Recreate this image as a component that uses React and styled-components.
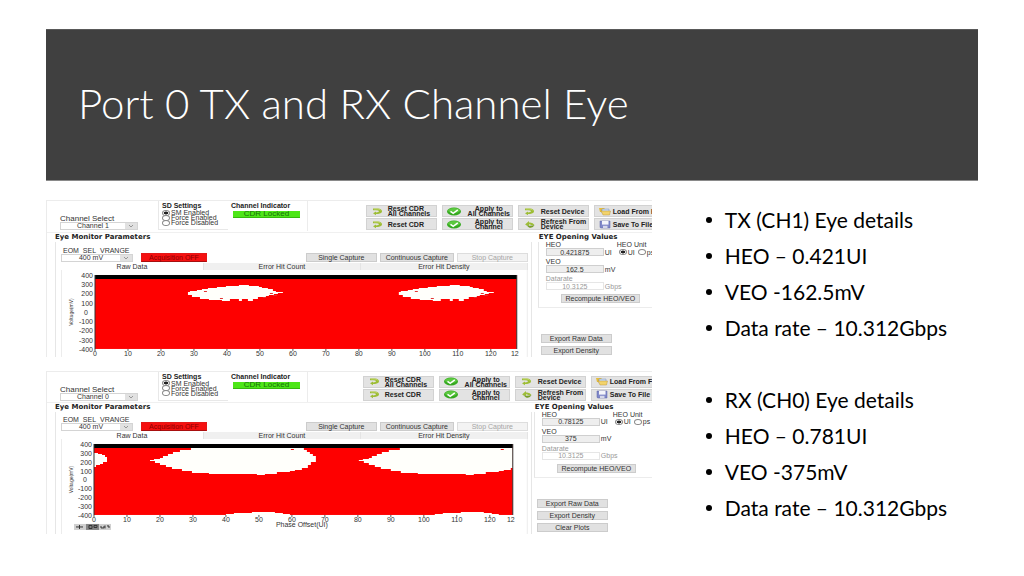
import React from 'react'
import styled, { createGlobalStyle } from 'styled-components'

const GlobalStyle = createGlobalStyle`
  * {
    box-sizing: border-box;
  }

  body {
    margin: 0;
    background: #ffffff;
  }

  h1, h2, h3, ul, fieldset {
    margin: 0;
    padding: 0;
    border: 0;
  }

  button, input, select {
    margin: 0;
    font: inherit;
    color: inherit;
  }
`

const Slide = styled.main`
  padding: 29px 46px 40px;
`

const Header = styled.header`
  display: flex;
  align-items: center;
  min-height: 152px;
  padding: 0 32px 4px;
  background: #404040;
  border-top: 1px solid #595959;
  border-bottom: 1px solid #8a8a8a;
`

const Title = styled.h1`
  font-family: Lato, 'Open Sans', sans-serif;
  font-size: 42px;
  font-weight: 300;
  line-height: 50px;
  color: #ffffff;
`

const Body = styled.div`
  display: grid;
  grid-template-columns: 65% minmax(0, 1fr);
  align-items: start;
  column-gap: 54px;
  padding-top: 19px;
`

const Captures = styled.div`
  display: grid;
  gap: 14px;
  font-family: 'Liberation Sans', Arial, sans-serif;
  font-size: 7px;
  line-height: 7px;
  color: #333333;
`

const Capture = styled.section`
  min-width: 0;
  overflow: hidden;
  border-left: 1px solid #ebebeb;
`

const TopBar = styled.div`
  display: flex;
  height: ${props => (props.$compact ? 32 : 33)}px;
  border-top: 1px solid #ececec;
  border-bottom: 1px solid #f0f0f0;
`

const Field = styled.div`
  display: flex;
  flex-direction: column;
`

const ChannelField = styled(Field)`
  width: 78px;
  margin: 14px 20px 0 13px;
  font-size: 8px;
`

const SelectBox = styled.div`
  position: relative;
  height: 8px;
  border: 1px solid #d4d4d4;

  svg {
    position: absolute;
    top: 0;
    right: 0;
    width: 12px;
    height: 6px;
    background: #e1e1e1;
    pointer-events: none;
  }
`

const Select = styled.select`
  display: block;
  width: 100%;
  height: 6px;
  padding: 0 12px 0 0;
  border: 0;
  background: #ffffff;
  appearance: none;
  font-size: 7px;
  line-height: 6px;
  text-align-last: center;
`

const SdSettings = styled.fieldset`
  width: 70px;
  height: 29px;
  padding: 1px 0 0 3px;
  border-left: 1px solid #e8e8e8;
  border-bottom: 1px solid #e8e8e8;
`

const GroupTitle = styled.div`
  line-height: 8px;
  font-weight: 700;
  color: #222222;
`

const RadioLabel = styled.label`
  display: flex;
  align-items: center;
  gap: 1px;
  height: 5px;
  white-space: nowrap;
`

const Radio = styled.input`
  flex: none;
  width: 8px;
  height: 6px;
  border: 1px solid #888888;
  border-radius: 50%;
  background: #ffffff;
  appearance: none;

  &:checked {
    background: radial-gradient(ellipse closest-side, #222222 60%, #ffffff 90%);
  }
`

const Indicator = styled.div`
  width: 80px;
  height: 30px;
  padding: 1px 0 0 3px;
  border-right: 1px solid #ececec;
`

const Locked = styled.output`
  display: block;
  width: 67px;
  margin: 1px 0 0 2px;
  background: #4de617;
  border-bottom: 1px solid #35b80c;
  font-size: 8px;
  line-height: 6px;
  text-align: center;
  color: #17700a;
`

const ActionClip = styled.div`
  width: ${props => (props.$compact ? 289 : 286)}px;
  margin: 4px 0 0 auto;
  overflow: hidden;
`

const Actions = styled.div`
  display: grid;
  grid-template-columns: repeat(4, 71px);
  gap: 1px 5px;
`

const ActionButton = styled.button`
  display: grid;
  grid-template-columns: 14px 1fr;
  align-items: center;
  height: 12px;
  padding: 0 1px 0 4px;
  border: 1px solid #d2d2d2;
  background: #e3e3e3;
  font-weight: 700;
  line-height: 5px;
  color: #222222;
  text-align: ${props => (props.$center ? 'center' : 'left')};
  white-space: nowrap;

  span {
    padding-left: ${props => props.$indent || 0}px;
  }

  svg {
    display: block;
    width: 14px;
    height: 9px;
  }
`

const Panels = styled.div`
  display: grid;
  grid-template-columns: minmax(0, 1fr) ${props => (props.$compact ? 118 : 114)}px;
  column-gap: ${props => (props.$compact ? 2 : 6)}px;
  padding-left: 8px;
`

const Panel = styled.section`
  display: flex;
  flex-direction: column;
  min-width: 0;
`

const PanelTitle = styled.h3`
  padding-left: ${props => (props.$inset ? 1 : 0)}px;
  font-family: 'DejaVu Sans', Verdana, sans-serif;
  font-size: 7px;
  font-weight: 700;
  line-height: 9px;
  color: #222222;
  white-space: nowrap;
`

const Monitor = styled.div`
  padding: ${props => (props.$compact ? 4 : 5)}px 3px 0 5px;
  border-left: 1px solid #e6e6e6;
  border-right: 1px solid #e6e6e6;
`

const Controls = styled.div`
  display: flex;
  align-items: flex-end;
  gap: 3px;
  padding-bottom: 1px;
`

const RangeField = styled(Field)`
  width: 72px;

  label {
    padding-left: 2px;
  }
`

const Button = styled.button`
  width: ${props => props.$width || 71}px;
  height: 9px;
  padding: 0;
  border: 1px solid #cccccc;
  background: #e1e1e1;
  line-height: 7px;
  text-align: center;
  white-space: nowrap;

  &:disabled {
    border-color: #dddddd;
    background: #f3f3f3;
    color: #a5a5a5;
  }
`

const AcquisitionButton = styled(Button)`
  margin: 0 auto 0 5px;
  border-color: #e31818;
  border-bottom-color: #a80f0f;
  background: #f51111;
  color: #8c0000;
`

const Tabs = styled.div`
  display: grid;
  grid-template-columns: 143fr 157fr 167fr;
`

const Tab = styled.button`
  height: 7px;
  padding: 0;
  border: 0;
  border-right: 1px solid #e4e4e4;
  background: ${props => (props.$active ? '#ffffff' : '#f0f0f0')};
  line-height: 7px;
  text-align: center;
`

const Plot = styled.svg`
  display: block;
  width: 100%;
  height: auto;

  text {
    fill: #333333;
    font-size: 7px;
  }
`

const Values = styled.div`
  display: grid;
  grid-template-columns: 58px 13px 1fr;
  align-items: center;
  padding: 0 0 4px 7px;
  border-left: 1px solid #e6e6e6;
  border-bottom: 1px solid #ececec;
  white-space: nowrap;
`

const ValueLabel = styled.label`
  grid-column: 1 / span 2;
  height: 6px;
  margin-top: ${props => (props.$first ? 0 : 3)}px;
  line-height: 6px;
  color: ${props => (props.$muted ? '#999999' : 'inherit')};
`

const ValueInput = styled.input`
  grid-column: 1;
  width: 100%;
  height: 8px;
  padding: 0;
  border: 1px solid #cfcfcf;
  background: #eeeeee;
  line-height: 6px;
  text-align: center;

  &:disabled {
    border-color: #e6e6e6;
    background: #ffffff;
    color: #999999;
  }
`

const Unit = styled.span`
  padding-left: 1px;
  color: ${props => (props.$muted ? '#999999' : 'inherit')};
`

const UnitTitle = styled.span`
  line-height: 6px;
`

const UnitChoice = styled.div`
  display: flex;
  gap: 3px;
  padding-left: 2px;
`

const Recompute = styled(Button)`
  grid-column: 1 / -1;
  margin: 4px 0 0 15px;
`

const Exports = styled.div`
  display: grid;
  gap: 3px;
  margin: auto 0 0 3px;
  padding-bottom: 2px;
`

const Notes = styled.ul`
  padding-top: 2px;
  list-style: none;
  font-family: Lato, 'Open Sans', sans-serif;
  font-size: 21px;
  line-height: 36px;
  color: #000000;
  white-space: nowrap;
`

const Note = styled.li`
  display: flex;
  align-items: center;
  gap: 13px;
  margin-top: ${props => (props.$spaced ? 36 : 0)}px;

  &:before {
    content: '';
    width: 6px;
    height: 6px;
    border-radius: 50%;
    background: #000000;
  }
`

const ResetIcon = () => (
  <svg viewBox="0 0 14 9">
    <path d="M2 1.500 H7 Q11 2 11 4.300 Q11 6.500 7 7 H5 V8.200 L2 6.200 L5 4.600 V5.500 Q8 5.300 8 4.300 Q8 3.300 5 3.300 H2 Z" fill="#9dbd35" />
    <path d="M3 2 H7 Q9.500 2.400 10 3.600" fill="none" stroke="#c8da72" strokeWidth="0.700" />
  </svg>
)

const RefreshIcon = () => (
  <svg viewBox="0 0 14 9">
    <path d="M2 4.500 L6 1 V2.500 Q10 2 11.500 5 H8 Q7 4 6 4.500 V6 Z" fill="#9dbd38" />
    <path d="M3 5 Q6 6.500 11.500 5 Q10 8.500 6 7.500 Z" fill="#789e2a" />
  </svg>
)

const ApplyIcon = () => (
  <svg viewBox="0 0 14 9">
    <ellipse cx="7" cy="4.500" rx="7" ry="4" fill="#35a91f" />
    <ellipse cx="7" cy="3.500" rx="6" ry="2.600" fill="#5bc83f" />
    <path d="M3.500 4.400 L6.200 6.300 L10.800 2.900" fill="none" stroke="#ffffff" strokeWidth="1.500" />
  </svg>
)

const LoadIcon = () => (
  <svg viewBox="0 0 14 9">
    <path d="M0 1 H5 L6 2 H9 V5 H1 Z" fill="#e4bc3c" />
    <path d="M3 2 H10 V6 H3 Z" fill="#c9dcf2" stroke="#7d93b4" strokeWidth="0.500" />
    <path d="M2 4 H11.500 L10.500 8 H4 Z" fill="#f2d36b" stroke="#b08c2b" strokeWidth="0.400" />
  </svg>
)

const SaveIcon = () => (
  <svg viewBox="0 0 14 9">
    <path d="M1 1 H11 V8 H2 L1 7.400 Z" fill="#8189c9" stroke="#5a61a5" strokeWidth="0.500" />
    <rect x="3" y="1" width="6.500" height="3.600" fill="#f4f5fb" />
    <rect x="4" y="5.800" width="4.500" height="2.200" fill="#d5d8ea" />
  </svg>
)

const Chevron = () => (
  <svg viewBox="0 0 12 6">
    <path d="M4 2 L6 4 L8 2" fill="none" stroke="#777777" strokeWidth="0.700" />
  </svg>
)

const actions = [
  { lines: ['Reset CDR', 'All Channels'], Icon: ResetIcon, indent: 3 },
  { lines: ['Apply to', 'All Channels'], Icon: ApplyIcon, center: true, indent: 6 },
  { lines: ['Reset Device'], Icon: ResetIcon, indent: 4 },
  { lines: ['Load From File'], Icon: LoadIcon },
  { lines: ['Reset CDR'], Icon: ResetIcon, indent: 3 },
  { lines: ['Apply to', 'Channel'], Icon: ApplyIcon, center: true, indent: 6 },
  { lines: ['Refresh From', 'Device'], Icon: RefreshIcon, indent: 4 },
  { lines: ['Save To File'], Icon: SaveIcon },
]

const txEye = [
  [127, 22], [129, 21], [136, 20], [141, 19], [147, 18], [156, 17], [165, 16],
  [178, 15], [188, 16], [198, 17], [201, 18], [207, 19], [212, 21], [215, 22],
  [222, 23], [217, 24], [213, 25], [208, 26], [205, 27], [197, 29], [192, 31],
  [187, 29], [181, 31], [178, 29], [174, 29], [169, 31], [161, 30], [148, 29],
  [139, 27], [131, 25], [127, 24],
]

const rxEdge = [
  [33, 14], [37, 15], [41, 16], [44, 18], [46, 23], [42, 25], [39, 26],
  [35, 28], [33, 28],
]

const rxEye = [
  [89, 21], [93, 20], [99, 19], [102, 17], [107, 15], [112, 13], [119, 11],
  [130, 9], [142, 7], [229, 7], [232, 9], [243, 11], [246, 13], [249, 15],
  [252, 17], [255, 20], [255, 23], [250, 26], [247, 29], [241, 31], [234, 32],
  [229, 33], [216, 35], [204, 36], [196, 35], [159, 35], [148, 34], [131, 32],
  [121, 30], [111, 28], [105, 26], [99, 24], [94, 22], [89, 22],
]

const rxFoot = [
  [155, 76], [165, 75], [173, 74], [191, 73], [214, 74], [222, 75], [229, 76],
  [155, 77],
]

const captures = [
  {
    id: 'tx',
    channel: 'Channel 1',
    heo: '0.421875',
    veo: '162.5',
    exports: ['Export Raw Data', 'Export Density'],
    chart: { height: 87, top: 5, width: 422, plotHeight: 74, left: 34, step: 33, period: 211, shapes: [txEye] },
  },
  {
    id: 'rx',
    compact: true,
    channel: 'Channel 0',
    heo: '0.78125',
    veo: '375',
    exports: ['Export Raw Data', 'Export Density', 'Clear Plots'],
    chart: {
      height: 95,
      top: 5,
      width: 419,
      plotHeight: 71,
      left: 33,
      step: 33,
      period: 209,
      shapes: [rxEye, rxFoot],
      edge: rxEdge,
      caption: 'Phase Offset(UI)',
    },
  },
]

const voltages = [400, 300, 200, 100, 0, -100, -200, -300, -400]
const offsets = [0, 10, 20, 30, 40, 50, 60, 70, 80, 90, 100, 110, 120]

// the samples are drawn as a staircase, one step for each point
const stepPath = points =>
  points.map(([x, y], i) => (i === 0 ? `M${x} ${y}` : `H${x}V${y}`)).join('') + 'Z'

const EyeChart = ({ id, chart }) => {
  const { left, top, width, plotHeight, height, step } = chart
  const bottom = top + plotHeight
  return (
    <Plot viewBox={`0 0 467 ${height}`} role="img" aria-label="Eye diagram">
      <clipPath id={`${id}-plot`}>
        <rect x={left} y={top + 3} width={width} height={plotHeight - 3} />
      </clipPath>
      <rect x={left} y={top} width={width} height={plotHeight} fill="#fe0000" />
      <g clipPath={`url(#${id}-plot)`} fill="#fffffb">
        {[0, chart.period].map(shift => (
          <g key={shift} transform={`translate(${shift} 0)`}>
            {chart.shapes.map((points, i) => (
              <path key={i} d={stepPath(points)} />
            ))}
          </g>
        ))}
        {chart.edge && <path d={stepPath(chart.edge)} />}
      </g>
      {id === 'tx' &&
        [0, 211].map(shift => (
          <path
            key={shift}
            d={`M${143 + shift} 21.500h3M${159 + shift} 28.500h3M${202 + shift} 27.500h3M${209 + shift} 23.500h3M${212 + shift} 25.500h4`}
            stroke="#e33030"
          />
        ))}
      {id === 'rx' && <path d="M230 10.500h3M440 10.500h3" stroke="#fe0000" />}
      <path d={`M0.500 0V${height}M466.500 0V${height}`} stroke="#ececec" />
      <rect x={left} y={top} width={width} height="4" fill="#000000" />
      <path d={`M${left} ${top}V${bottom}M${left + width} ${top}V${bottom}`} stroke="#333333" />
      {voltages.map((value, i) => (
        <text
          key={value}
          x={value === 0 ? left - 7 : left - 2}
          y={top + 3 + (i * plotHeight) / 8}
          textAnchor="end"
        >
          {value}
        </text>
      ))}
      {offsets.map((value, i) => (
        <g key={value}>
          <path d={`M${left + i * step} ${bottom}v2`} stroke="#555555" />
          <text x={left + i * step} y={bottom + 7} textAnchor="middle">
            {value}
          </text>
        </g>
      ))}
      <text x={left + width - 2} y={bottom + 7} textAnchor="middle">
        12
      </text>
      <text
        transform={`translate(12 ${top + plotHeight / 2}) rotate(-90)`}
        textAnchor="middle"
        style={{ fontSize: 5 }}
      >
        Voltage(mV)
      </text>
      {chart.caption && (
        <g>
          <text x="241" y="88" textAnchor="middle">
            {chart.caption}
          </text>
          <rect x="13" y="85" width="12" height="6" fill="#d0d0d0" />
          <rect x="25" y="85" width="13" height="6" fill="#858585" />
          <rect x="38" y="85" width="12" height="6" fill="#d0d0d0" />
          <path d="M15 88h7M18.500 86v4M28 86.500h3v3h-3zM33 86.500h3v2h-3zM40 87v2h3v-2M44 86.500v3M46 87h2v2" fill="none" stroke="#333333" />
        </g>
      )}
    </Plot>
  )
}

const Toolbar = ({ id, channel, compact }) => (
  <TopBar $compact={compact}>
    <ChannelField>
      <label htmlFor={`${id}-channel`}>Channel Select</label>
      <SelectBox>
        <Select id={`${id}-channel`}>
          <option>{channel}</option>
        </Select>
        <Chevron />
      </SelectBox>
    </ChannelField>
    <SdSettings>
      <GroupTitle>SD Settings</GroupTitle>
      {['SM Enabled', 'Force Enabled', 'Force Disabled'].map((label, i) => (
        <RadioLabel key={label}>
          <Radio type="radio" name={`${id}-sd`} defaultChecked={i === 0} />
          {label}
        </RadioLabel>
      ))}
    </SdSettings>
    <Indicator>
      <GroupTitle>Channel Indicator</GroupTitle>
      <Locked>CDR Locked</Locked>
    </Indicator>
    <ActionClip $compact={compact}>
      <Actions>
        {actions.map(({ lines, Icon, center, indent }) => (
          <ActionButton key={lines.join(' ')} $center={center} $indent={indent}>
            <Icon />
            <span>
              {lines.map(line => (
                <div key={line}>{line}</div>
              ))}
            </span>
          </ActionButton>
        ))}
      </Actions>
    </ActionClip>
  </TopBar>
)

const OpeningValues = ({ id, heo, veo, exports }) => (
  <Panel>
    <PanelTitle $inset>EYE Opening Values</PanelTitle>
    <Values>
      <ValueLabel htmlFor={`${id}-heo`} $first>
        HEO
      </ValueLabel>
      <UnitTitle>HEO Unit</UnitTitle>
      <ValueInput id={`${id}-heo`} readOnly value={heo} />
      <Unit>UI</Unit>
      <UnitChoice>
        <RadioLabel>
          <Radio type="radio" name={`${id}-unit`} defaultChecked />
          UI
        </RadioLabel>
        <RadioLabel>
          <Radio type="radio" name={`${id}-unit`} />
          ps
        </RadioLabel>
      </UnitChoice>
      <ValueLabel htmlFor={`${id}-veo`}>VEO</ValueLabel>
      <ValueInput id={`${id}-veo`} readOnly value={veo} />
      <Unit>mV</Unit>
      <ValueLabel htmlFor={`${id}-rate`} $muted>
        Datarate
      </ValueLabel>
      <ValueInput id={`${id}-rate`} disabled value="10.3125" />
      <Unit $muted>Gbps</Unit>
      <Recompute $width={79}>Recompute HEO/VEO</Recompute>
    </Values>
    <Exports>
      {exports.map(label => (
        <Button key={label}>{label}</Button>
      ))}
    </Exports>
  </Panel>
)

const EyeCapture = props => {
  const { id, compact, chart } = props
  return (
    <Capture>
      <Toolbar {...props} />
      <Panels $compact={compact}>
        <Panel>
          <PanelTitle>Eye Monitor Parameters</PanelTitle>
          <Monitor $compact={compact}>
            <Controls>
              <RangeField>
                <label htmlFor={`${id}-range`}>EOM_SEL_VRANGE</label>
                <SelectBox>
                  <Select id={`${id}-range`}>
                    <option>400 mV</option>
                  </Select>
                  <Chevron />
                </SelectBox>
              </RangeField>
              <AcquisitionButton $width={66}>Acquisition OFF</AcquisitionButton>
              <Button>Single Capture</Button>
              <Button $width={74}>Continuous Capture</Button>
              <Button disabled>Stop Capture</Button>
            </Controls>
            <Tabs>
              <Tab $active>Raw Data</Tab>
              <Tab>Error Hit Count</Tab>
              <Tab>Error Hit Density</Tab>
            </Tabs>
            <EyeChart id={id} chart={chart} />
          </Monitor>
        </Panel>
        <OpeningValues {...props} />
      </Panels>
    </Capture>
  )
}

const App = () => {
  return (
    <>
      <GlobalStyle />
      <Slide>
        <Header>
          <Title>Port 0 TX and RX Channel Eye</Title>
        </Header>
        <Body>
          <Captures>
            {captures.map(capture => (
              <EyeCapture key={capture.id} {...capture} />
            ))}
          </Captures>
          <Notes>
            <Note>TX (CH1) Eye details</Note>
            <Note>HEO – 0.421UI</Note>
            <Note>VEO -162.5mV</Note>
            <Note>Data rate – 10.312Gbps</Note>
            <Note $spaced>RX (CH0) Eye details</Note>
            <Note>HEO – 0.781UI</Note>
            <Note>VEO -375mV</Note>
            <Note>Data rate – 10.312Gbps</Note>
          </Notes>
        </Body>
      </Slide>
    </>
  )
}

export default App
